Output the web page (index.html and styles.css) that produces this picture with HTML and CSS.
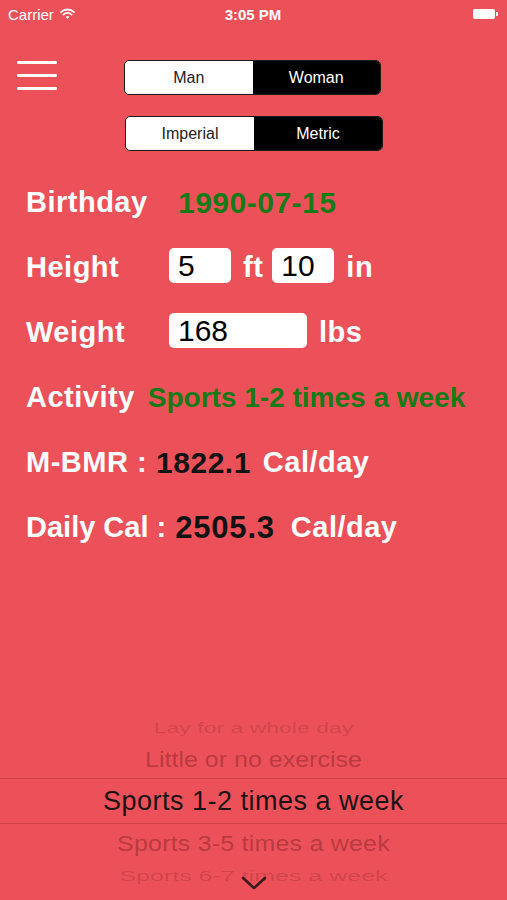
FILE: index.html
```html
<!DOCTYPE html>
<html lang="en">
<head>
  <meta charset="UTF-8">
  <meta name="viewport" content="width=device-width, initial-scale=1.0">
  <title>Calorie Calculator</title>
  <link rel="stylesheet" href="styles.css">
</head>
<body>
  <div class="screen">
    <div class="status-bar">
      <div class="carrier">
        Carrier
        <svg class="wifi" width="15" height="12" viewBox="0 0 15 12">
          <path d="M1 4.2a9.2 9.2 0 0 1 13 0" fill="none" stroke="#fff" stroke-width="1.8" stroke-linecap="round"/>
          <path d="M3.4 6.6a5.8 5.8 0 0 1 8.2 0" fill="none" stroke="#fff" stroke-width="1.8" stroke-linecap="round"/>
          <path d="M5.6 9a2.7 2.7 0 0 1 3.8 0L7.5 11z" fill="#fff"/>
        </svg>
      </div>
      <div class="clock">3:05 PM</div>
      <div class="battery"><span class="battery-body"></span><span class="battery-nub"></span></div>
    </div>

    <div class="top">
      <div class="menu">
        <span></span>
        <span></span>
        <span></span>
      </div>
      <div class="segments">
        <div class="seg">
          <div class="seg-item">Man</div>
          <div class="seg-item active">Woman</div>
        </div>
        <div class="seg seg-units">
          <div class="seg-item">Imperial</div>
          <div class="seg-item active">Metric</div>
        </div>
      </div>
    </div>

    <div class="form">
      <div class="row">
        <div class="label fixed">Birthday</div>
        <div class="green date">1990-07-15</div>
      </div>
      <div class="row">
        <div class="label fixed">Height</div>
        <div class="field short">5</div>
        <div class="label unit">ft</div>
        <div class="field short">10</div>
        <div class="label unit">in</div>
      </div>
      <div class="row">
        <div class="label fixed">Weight</div>
        <div class="field long">168</div>
        <div class="label unit lbs">lbs</div>
      </div>
      <div class="row">
        <div class="label">Activity</div>
        <div class="green activity">Sports 1-2 times a week</div>
      </div>
      <div class="row result">
        <div class="label">M-BMR :</div>
        <div class="number">1822.1</div>
        <div class="label">Cal/day</div>
      </div>
      <div class="row result">
        <div class="label tight">Daily Cal :</div>
        <div class="number wide">2505.3</div>
        <div class="label">Cal/day</div>
      </div>
    </div>

    <div class="picker">
      <div class="pick far-top"><span>Lay for a whole day</span></div>
      <div class="pick near-top"><span>Little or no exercise</span></div>
      <div class="pick selected"><span>Sports 1-2 times a week</span></div>
      <div class="pick near-bottom"><span>Sports 3-5 times a week</span></div>
      <div class="pick far-bottom"><span>Sports 6-7 times a week</span></div>
      <svg class="chevron" width="26" height="14" viewBox="0 0 26 14">
        <polyline points="2,2 13,12 24,2" fill="none" stroke="#3a1a1c" stroke-width="2.6" stroke-linecap="round" stroke-linejoin="round"/>
      </svg>
    </div>
  </div>
</body>
</html>
```

FILE: styles.css
```css
body, html {
  margin: 0;
  padding: 0;
  width: 100%;
  height: 100%;
  background-color: #ec5159;
  font-family: 'Liberation Sans', Arial, sans-serif;
}

.screen {
  display: flex;
  flex-direction: column;
  height: 900px;
  color: white;
}

/* status bar */
.status-bar {
  display: flex;
  align-items: center;
  justify-content: space-between;
  height: 28px;
  padding: 0 9px 0 8px;
  font-size: 15px;
}

.carrier {
  display: flex;
  align-items: center;
  gap: 6px;
  width: 100px;
}

.clock {
  font-weight: bold;
}

.battery {
  display: flex;
  align-items: center;
  justify-content: flex-end;
  width: 100px;
}

.battery-body {
  width: 22px;
  height: 10px;
  background: white;
  border-radius: 2px;
}

.battery-nub {
  width: 2px;
  height: 4px;
  margin-left: 1px;
  background: white;
  border-radius: 0 1px 1px 0;
}

/* menu + segmented controls */
.top {
  display: flex;
  margin-top: 32px;
  padding-left: 17px;
}

.menu {
  display: flex;
  flex-direction: column;
  gap: 10px;
  width: 40px;
  margin-top: 1px;
}

.menu span {
  height: 3px;
  background: white;
  border-radius: 1px;
}

.segments {
  margin-left: 67px;
}

.seg {
  display: grid;
  grid-template-columns: 1fr 1fr;
  box-sizing: border-box;
  width: 257px;
  height: 35px;
  border: 1px solid #1a1a1a;
  border-radius: 5px;
  overflow: hidden;
  background: white;
}

.seg-units {
  width: 258px;
  margin-top: 21px;
  margin-left: 1px;
}

.seg-item {
  display: flex;
  align-items: center;
  justify-content: center;
  font-size: 16px;
  color: #222;
}

.seg-item.active {
  background: black;
  color: white;
}

/* form rows */
.form {
  margin-top: 19px;
  padding-left: 26px;
}

.row {
  display: flex;
  align-items: center;
  height: 65px;
  gap: 12px;
}

.row.result {
  gap: 9px;
}

.label {
  font-size: 29px;
  font-weight: bold;
  letter-spacing: 0.5px;
  white-space: nowrap;
}

.label.fixed {
  width: 131px;
}

.label.tight {
  letter-spacing: 0;
}

.green {
  color: #177a17;
  font-weight: bold;
  white-space: nowrap;
}

.date {
  font-size: 30px;
  letter-spacing: 0.5px;
  margin-left: 9px;
}

.activity {
  font-size: 28px;
  margin-left: 1px;
}

.field {
  box-sizing: border-box;
  height: 35px;
  padding-left: 9px;
  margin-bottom: 4px;
  background: white;
  border-radius: 5px;
  color: black;
  font-size: 30px;
  line-height: 35px;
}

.field.short {
  width: 62px;
}

.field.long {
  width: 138px;
}

.unit {
  margin-right: -3px;
}

.number {
  font-size: 30px;
  font-weight: bold;
  letter-spacing: 0.5px;
  color: #111;
  margin-right: 3px;
}

.number.wide {
  font-size: 31px;
  letter-spacing: 0.8px;
  margin-right: 7px;
}

/* activity picker */
.picker {
  position: relative;
  margin-top: auto;
  margin-bottom: 10px;
}

.pick {
  display: flex;
  align-items: center;
  justify-content: center;
  white-space: nowrap;
}

.pick span {
  display: inline-block;
}

.far-top {
  height: 24px;
  font-size: 23px;
  color: rgba(60, 0, 0, 0.16);
}

.far-top span {
  transform: scaleY(0.6);
}

.near-top {
  height: 38px;
  font-size: 25px;
  color: rgba(60, 0, 0, 0.3);
}

.near-top span {
  transform: scaleY(0.88);
}

.selected {
  height: 44px;
  border-top: 1px solid rgba(110, 0, 0, 0.22);
  border-bottom: 1px solid rgba(110, 0, 0, 0.22);
  font-size: 27px;
  letter-spacing: 0.5px;
  color: #1c1112;
}

.near-bottom {
  height: 38px;
  font-size: 25px;
  letter-spacing: 0.2px;
  color: rgba(60, 0, 0, 0.3);
}

.near-bottom span {
  transform: scaleY(0.9);
}

.far-bottom {
  height: 28px;
  font-size: 25px;
  color: rgba(60, 0, 0, 0.16);
}

.far-bottom span {
  transform: scaleY(0.55);
}

.chevron {
  position: absolute;
  left: 241px;
  bottom: 0;
}
```
